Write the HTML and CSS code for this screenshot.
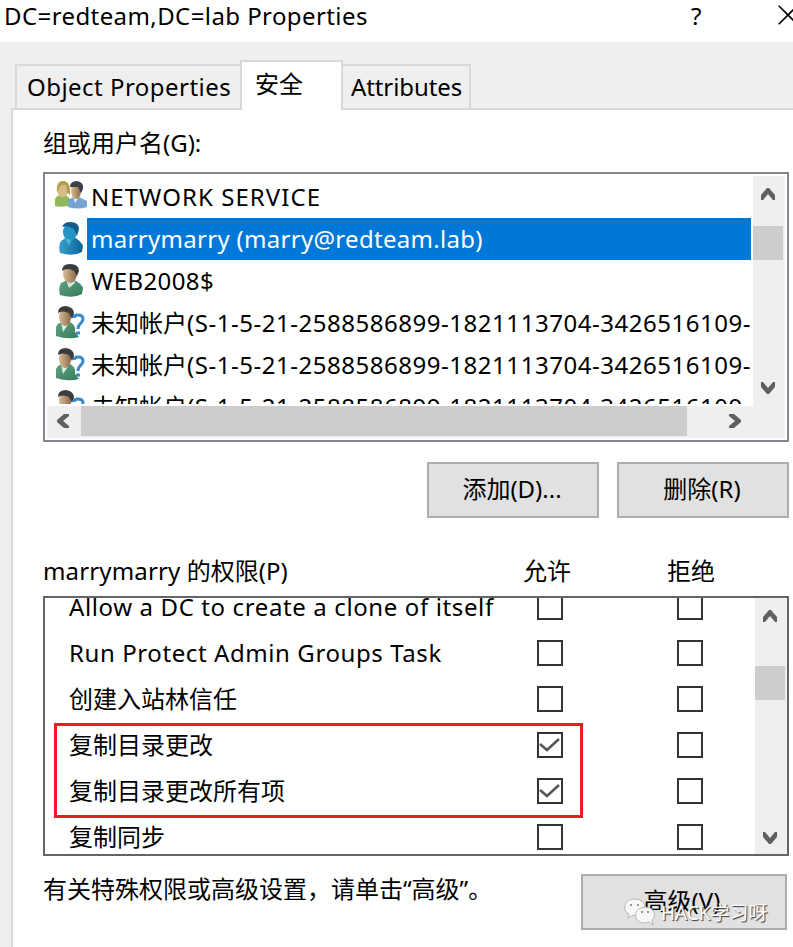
FILE: index.html
```html
<!DOCTYPE html>
<html lang="zh-CN">
<head>
<meta charset="utf-8">
<title>DC=redteam,DC=lab Properties</title>
<link rel="stylesheet" href="styles.css">
</head>
<body>
<svg class="defs" width="0" height="0">
  <defs>
    <linearGradient id="skin"><stop offset="0" stop-color="#d9bd98"/><stop offset="1" stop-color="#8d6845"/></linearGradient>
    <linearGradient id="green" x2="1" y2="1"><stop offset="0" stop-color="#62a283"/><stop offset="1" stop-color="#347b5a"/></linearGradient>
    <linearGradient id="blue"><stop offset="0" stop-color="#3ba0cd"/><stop offset="1" stop-color="#086398"/></linearGradient>
    <symbol id="user" viewBox="0 0 32 34">
      <path d="M5 32Q3 25 6 20L12 17H19Q26 20 28 25L27 31Q18 36 5 32Z" fill="url(#green)"/>
      <path d="M11 17L14 25L20 20L18 15Z" fill="#d9e8df"/>
      <ellipse cx="15" cy="11" rx="7" ry="9" fill="url(#skin)"/>
      <path d="M7 8Q7 1 15 1Q24 1 24 8L22 13L19 8Q12 4 7 8Z" fill="#3a3c3d"/>
    </symbol>
    <symbol id="unknown" viewBox="0 0 32 34">
      <path d="M1 31V22Q3 17 9 17H15Q21 20 20 27L24 32Q13 35 1 31Z" fill="url(#green)"/>
      <path d="M6 17L8 27L14 18Z" fill="#e0ece6"/>
      <ellipse cx="10" cy="12" rx="6" ry="9" fill="url(#skin)"/>
      <path d="M3 8Q3 1 11 1Q19 2 19 9L17 14L14 8Q7 5 3 8Z" fill="#3a3c3d"/>
      <path d="M19 13Q19 10 23 10Q28 10 28 14Q28 16 25 19Q23 21 23 24M21 28H25" fill="none" stroke="#398bc9" stroke-width="3"/>
    </symbol>
    <symbol id="selected" viewBox="0 0 32 34">
      <path d="M5 32Q3 25 6 20L12 16H19Q26 20 28 25L27 31Q18 36 5 32Z" fill="url(#blue)"/>
      <ellipse cx="15" cy="11" rx="7" ry="9" fill="#2594c4"/>
      <path d="M7 6Q9 1 15 1Q24 1 24 8L22 15L19 8Q12 4 7 6Z" fill="#135d88"/>
      <path d="M10 17L14 25L16 19Z" fill="#4fb4d8"/>
    </symbol>
    <symbol id="group" viewBox="0 0 32 34">
      <path d="M0 27V20Q3 15 9 16Q16 17 16 26Q8 29 0 27Z" fill="#91b95a"/>
      <ellipse cx="8" cy="10" rx="6" ry="8" fill="#d8bc86"/>
      <path d="M2 14Q1 2 8 2Q16 2 15 16L12 13L11 6Q6 5 4 9Z" fill="#b89d50"/>
      <path d="M13 28V22Q17 17 24 18L32 22V28Q23 31 13 28Z" fill="#76a4d1"/>
      <path d="M18 17L20 24L24 18Z" fill="#e8eff6"/>
      <ellipse cx="21" cy="12" rx="5" ry="8" fill="url(#skin)"/>
      <path d="M15 8Q15 2 22 2Q29 3 28 10L26 14L23 8Z" fill="#3b4048"/>
    </symbol>
    <symbol id="chevron" viewBox="0 0 14 12"><path d="M0 12V7L6 0H8L14 7V12H12L7 6L2 12Z" fill="#606060"/></symbol>
  </defs>
</svg>
<div class="dialog">
  <header class="titlebar">
    <h1 class="title">DC=redteam,DC=lab Properties</h1>
    <span class="help">?</span>
    <svg class="close" width="20" height="20" viewBox="0 0 20 20"><path d="M.7.7L19.3 19.3M19.3.7L.7 19.3" stroke="#000" stroke-width="1.6"/></svg>
  </header>
  <nav class="tabs">
    <div class="tab tab-object"><span class="t-object">Object Properties</span></div>
    <div class="tab active">安全</div>
    <div class="tab tab-attributes"><span class="t-attributes">Attributes</span></div>
  </nav>
  <main class="panel">
    <p class="group-label">组或用户名(G):</p>
    <section class="listbox">
      <div class="names">
        <div class="name-row"><svg><use href="#group"/></svg><span class="t-network">NETWORK SERVICE</span></div>
        <div class="name-row picked"><svg><use href="#selected"/></svg><span class="t-marry">marrymarry (marry@redteam.lab)</span></div>
        <div class="name-row"><svg><use href="#user"/></svg><span class="t-web">WEB2008$</span></div>
        <div class="name-row"><svg><use href="#unknown"/></svg><span>未知帐户<b class="sid">(S-1-5-21-2588586899-1821113704-3426516109-</b></span></div>
        <div class="name-row"><svg><use href="#unknown"/></svg><span>未知帐户<b class="sid">(S-1-5-21-2588586899-1821113704-3426516109-</b></span></div>
        <div class="name-row"><svg><use href="#unknown"/></svg><span>未知帐户<b class="sid">(S-1-5-21-2588586899-1821113704-3426516109-</b></span></div>
      </div>
      <div class="vbar"><svg class="arrow"><use href="#chevron"/></svg><i class="thumb"></i><svg class="arrow down"><use href="#chevron"/></svg></div>
      <div class="hbar"><svg class="arrow left"><use href="#chevron"/></svg><i class="thumb"></i><svg class="arrow right"><use href="#chevron"/></svg></div>
    </section>
    <div class="actions"><button>添加(D)...</button><button>删除(R)</button></div>
    <div class="perm-head"><span><span class="t-perm">marrymarry</span> 的权限(P)</span><span>允许</span><span>拒绝</span></div>
    <section class="permissions">
      <div class="perm-list">
        <div class="perm-row"><span class="t-allow">Allow a DC to create a clone of itself</span><i class="box"></i><i class="box"></i></div>
        <div class="perm-row"><span class="t-run">Run Protect Admin Groups Task</span><i class="box"></i><i class="box"></i></div>
        <div class="perm-row"><span>创建入站林信任</span><i class="box"></i><i class="box"></i></div>
        <div class="perm-row"><span>复制目录更改</span><i class="box"><svg viewBox="0 0 22 22"><path d="M1 10L8 16L20 5" /></svg></i><i class="box"></i></div>
        <div class="perm-row"><span>复制目录更改所有项</span><i class="box"><svg viewBox="0 0 22 22"><path d="M1 10L8 16L20 5" /></svg></i><i class="box"></i></div>
        <div class="perm-row"><span>复制同步</span><i class="box"></i><i class="box"></i></div>
      </div>
      <div class="vbar"><svg class="arrow"><use href="#chevron"/></svg><i class="thumb"></i><svg class="arrow down"><use href="#chevron"/></svg></div>
      <div class="highlight"></div>
    </section>
    <footer class="footer">
      <p>有关特殊权限或高级设置，请单击“高级”。</p>
      <button class="advanced">高级(V)</button>
      <div class="watermark">
        <svg width="32" height="28" viewBox="0 0 32 28"><g fill="#f8f8f8" stroke="#aaa" stroke-width=".8"><path d="M10.500 1C4 1 .8 5 .8 9.500Q.8 14 5 16L4 20L8.500 17.500Q20 19 21 9.500Q20 1 10.500 1Z"/><path d="M21 9Q12 10 11.500 17Q12 25 21 25L25 24L29 27L28 22Q31 20 30.500 16Q29 9 21 9Z"/></g><g fill="#777"><circle cx="7" cy="7" r="1"/><circle cx="14" cy="7" r="1"/><circle cx="18" cy="14" r="1"/><circle cx="24" cy="14" r="1"/></g></svg>
        <span>HACK学习呀</span>
      </div>
    </footer>
  </main>
</div>
</body>
</html>
```

FILE: styles.css
```css
* { box-sizing: border-box; }
body { margin: 0; background: #efefef; color: #000; font: 24px/32px "Noto Sans", "Noto Sans CJK SC", sans-serif; overflow: hidden; }
p, h1 { margin: 0; font: inherit; }
.defs { display: block; }
.dialog { width: 793px; height: 947px; display: flex; flex-direction: column; overflow: hidden; }
.titlebar { height: 42px; flex: none; background: #fff; display: grid; grid-template-columns: 687px 91px 20px; padding-left: 4px; }
.title { letter-spacing: .41px; }
.close { margin-top: 5px; margin-left: -4px; }
.tabs { height: 50px; flex: none; display: flex; align-items: flex-end; margin: 18px 0 -2px 15px; position: relative; }
.tab { height: 46px; border: 2px solid #d9d9d9; padding: 5px 0 0 10px; white-space: nowrap; }
.tab-object { width: 227px; border-right: 0; }
.tab.active { width: 103px; height: 50px; background: #fff; border-bottom: 0; padding: 6px 0 0 13px; margin-left: -2px; }
.tab-attributes { width: 128px; border-left: 0; padding-left: 8px; }
.t-object { letter-spacing: .47px; }
.t-attributes { letter-spacing: -.1px; }
.t-network { letter-spacing: 1.05px; }
.t-marry { letter-spacing: .3px; }
.t-web { letter-spacing: .4px; }
.sid { font-weight: 400; letter-spacing: .53px; }
.t-perm { letter-spacing: .15px; }
.t-allow { letter-spacing: .62px; }
.t-run { letter-spacing: .59px; }
.panel { margin-left: 11px; flex: 1; background: #fff; border: solid #d9d9d9; border-width: 2px 0 0 2px; padding: 17px 4px 0 30px; }
.group-label { height: 45px; }
.listbox { width: 746px; height: 270px; border: 2px solid #828790; padding: 2px; display: grid; grid-template: 230px 32px / 706px 32px; }
.names { overflow: hidden; height: 228px; width: 704px; }
.name-row { display: flex; height: 42px; line-height: 42px; white-space: nowrap; }
.name-row svg { width: 32px; height: 34px; margin: 3px 0 0 8px; flex: none; }
.name-row span { padding-left: 4px; flex: 1; }
.picked span { background: #0078d7; color: #fff; }
.vbar { background: #efefef; display: flex; flex-direction: column; }
.arrow { width: 14px; height: 12px; display: block; flex: none; margin: 12px 0 0 8px; }
.down { transform: rotate(180deg); margin-top: auto; margin-bottom: 12px; }
.vbar .thumb { width: 30px; height: 34px; margin-top: 26px; background: #cdcdcd; }
.hbar { grid-column: 1 / 3; background: #efefef; display: flex; }
.hbar .thumb { width: 606px; height: 30px; background: #cdcdcd; margin-left: 11px; }
.hbar .left { transform: rotate(-90deg); margin: 9px 0 0 9px; }
.hbar .right { transform: rotate(90deg); margin: 9px 0 0 41px; }
.actions { display: flex; gap: 18px; justify-content: flex-end; margin-top: 20px; }
button { width: 172px; height: 56px; border: 2px solid #adadad; background: #e1e1e1; color: #000; font: inherit; padding: 0 2px 3px 0; }
.perm-head { height: 78px; padding-top: 37px; display: grid; grid-template-columns: 480px 144px 80px; white-space: nowrap; }
.permissions { width: 746px; height: 260px; border: 2px solid #646464; display: flex; justify-content: space-between; position: relative; }
.perm-list { width: 710px; height: 256px; overflow: hidden; }
.perm-row { height: 46px; display: grid; grid-template-columns: 468px 140px 26px; align-items: center; padding-left: 24px; white-space: nowrap; }
.perm-row:first-child { margin-top: -14px; }
.box { display: block; width: 26px; height: 26px; border: 2px solid #333; background: #fff; margin-bottom: -1px; }
.box { margin-bottom: 0; }
.box svg { display: block; width: 22px; height: 22px; fill: none; stroke: #555; stroke-width: 2.5; }
.permissions .vbar { width: 32px; }
.permissions .thumb { margin-top: 44px; }
.permissions .down { margin-bottom: 10px; }
.highlight { position: absolute; left: 9px; top: 125px; width: 529px; height: 95px; border: 3px solid #ed1c24; }
.footer { display: flex; justify-content: space-between; position: relative; padding: 18px 2px 0 0; white-space: nowrap; }
.footer p { margin-top: -1px; }
.advanced { width: 206px; padding-right: 4px; }
.watermark { position: absolute; left: 581px; top: 42px; display: flex; height: 30px; color: #fff; text-shadow: 1px 1px 1px #333; font-size: 19px; line-height: 30px; gap: 5px; }
```
